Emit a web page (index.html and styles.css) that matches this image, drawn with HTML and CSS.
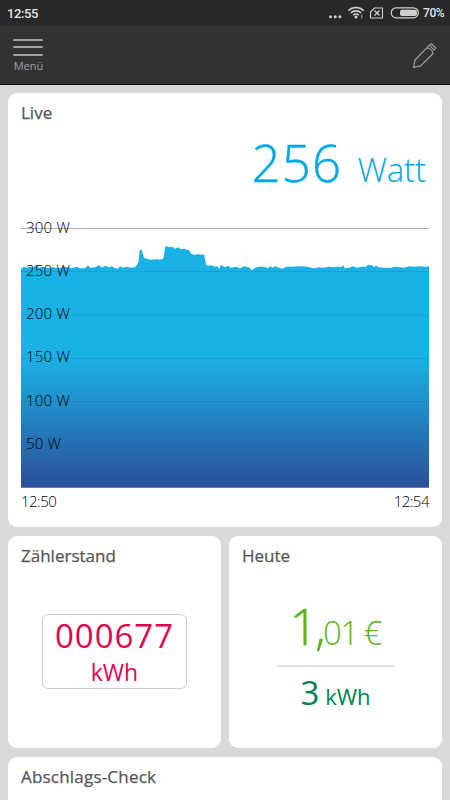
FILE: index.html
```html
<!DOCTYPE html>
<html lang="de">
<head>
	<meta charset="utf-8">
	<meta name="viewport" content="width=device-width,initial-scale=1">
	<title>Live</title>
	<link rel="stylesheet" href="styles.css">
</head>
<body>
	<div class="statusbar">
		<span class="clock">12:55</span>
		<svg class="status-icons" width="96" height="26" viewBox="0 0 96 26">
			<g fill="#d0d0d0">
				<circle cx="2.5" cy="16.7" r="1.5"/><circle cx="7.2" cy="16.7" r="1.5"/><circle cx="11.9" cy="16.7" r="1.5"/>
				<circle cx="28" cy="17" r="1.6"/>
				<path d="M33 14.5h1.4v4H33z" opacity=".5"/>
				<rect x="72" y="9.7" width="17" height="6.3" rx="2"/>
			</g>
			<g fill="none" stroke="#d0d0d0" stroke-width="1.6">
				<path d="M20.3 10.7a11 11 0 0 1 15.4 0M22.8 13a7.5 7.5 0 0 1 10.4 0M25.2 15.3a4 4 0 0 1 5.6 0"/>
				<path d="M46.5 8h8v10h-12v-6z" stroke-width="1.1"/>
				<path d="M46.500 10.500l5 5M51.500 10.500l-5 5" stroke-width="1.3"/>
				<rect x="63.2" y="7.8" width="27.2" height="10" rx="5" stroke-width="1.2"/>
			</g>
		</svg>
		<span class="percent">70%</span>
	</div>
	<div class="navbar">
		<a class="menu">
			<i></i><i></i><i></i>
			<span>Menü</span>
		</a>
		<svg class="edit" width="26" height="28" viewBox="0 0 26 28" fill="none" stroke="#a0a0a0" stroke-width="1.2" stroke-linejoin="round" stroke-linecap="round">
			<path d="M1.500 25.500l1.500-7.500L17.500 3.200l2-1.500 4.200 4.300-1.600 2.200M1.500 25.500l7.200-1.600L21 11.500M14.800 6c3 .2 5.800 2.500 6.200 5.500M17.500 3.200l4.600 5"/>
		</svg>
	</div>
	<div class="cards">
		<div class="card live">
			<h2>Live</h2>
			<div class="now"><span class="num">256</span><span class="unit">Watt</span></div>
			<svg class="chart" width="408" height="264" viewBox="0 0 408 264">
				<defs>
					<linearGradient id="fill" x1="0" y1="20" x2="0" y2="264" gradientUnits="userSpaceOnUse">
						<stop offset="0" stop-color="#1ab2e5"/>
						<stop offset=".46" stop-color="#1ab2e5"/>
						<stop offset="1" stop-color="#2b4e99"/>
					</linearGradient>
				</defs>
				<path transform="translate(0 .8)" fill="url(#fill)" d="M0 263V44L3 42 6 43 9 42 12 43 15 40 18 43 22 42 27 43.500 32 42.500 38 43.500 44 42 50 43.500 56 42 59 43.500 64 43.500 67 40.500 69 43 74 42.500 78 40.500 81 43 84 41 88 42.500 91 41.500 94 43.500 97 44 99 41.500 102 43 106 42 110 43 114 42.500 116 40 117.500 37 118.500 27 119.500 24 121 26 123 33 126 34 129 35 132 34.500 134 35 136 34 138 35 142 34 143 31 144 22 146 21.500 148 22.500 151 22 154 24 157 22.500 160 24.500 163 24 166 25 168 25 170 29 173 30 178 29.500 182 30 183 29 185 40 187 41 190 40.500 194 42 197 41.500 198 44.500 200 40 204 42.500 207 41 210 43 215 42 219 43.500 223 41.500 228 42.500 231 45.500 234 43 238 42 243 42 247 43.500 249 41.500 252 43 254 41.500 258 43 261 44 266 42 272 42 277 41.500 283 41.500 288 42.500 293 43.500 298 42.500 303 43 307 42 312 42.500 316 42 320 42.500 322 40.500 324 43.500 328 43 332 41.500 336 43 340 42 345 42 347 40 351 40.500 353 42.500 355 41 358 42.500 364 43 370 43 374 42 379 42.500 383 43 388 41.500 394 42 399 41.500 404 42 408 41.500V263z"/>
				<path d="M0 4.500H408" stroke="#b0b0b0"/>
				<path d="M0 47.500H408M0 91H408M0 134.500H408M0 177.500H408M0 220.500H408" stroke="#125f91" stroke-opacity=".22"/>
				<g class="labels">
					<text x="5" y="9">300 W</text>
					<text x="5" y="52">250 W</text>
					<text x="5" y="95">200 W</text>
					<text x="5" y="138">150 W</text>
					<text x="5" y="181.500">100 W</text>
					<text x="5" y="225">50 W</text>
				</g>
			</svg>
			<div class="times"><span>12:50</span><span>12:54</span></div>
		</div>
		<div class="card meter">
			<h2>Zählerstand</h2>
			<div class="counter">
				<span class="digits">000677</span>
				<span class="kwh">kWh</span>
			</div>
		</div>
		<div class="card today">
			<h2>Heute</h2>
			<div class="cost"><span class="euro">1,</span><span class="cent">01</span><span class="sign">€</span></div>
			<div class="usage"><span class="amount">3</span><span class="kwh">kWh</span></div>
		</div>
		<div class="card check">
			<h2>Abschlags-Check</h2>
		</div>
	</div>
</body>
</html>
```

FILE: styles.css
```css
* { box-sizing: border-box; }
body { margin: 0; height: 800px; overflow: hidden; background: #d9d9d9; font-family: "Open Sans", sans-serif; color: #555; }

.statusbar { display: flex; align-items: center; height: 26px; padding: 0 6px 0 7px; background: #282828; color: #e4e4e4; font-family: Roboto, sans-serif; font-weight: 500; }
.clock { font-size: 13px; letter-spacing: -.4px; flex: 1; }
.status-icons { margin-right: -1px; }
.percent { font-size: 12px; width: 21px; letter-spacing: -.4px; white-space: nowrap; }

.navbar { display: flex; justify-content: space-between; height: 59px; padding: 13px 12px 0 13px; background: #323232; border-bottom: 1px solid #000; }
.menu { width: 31px; color: #a0a09c; font-size: 11px; text-align: center; }
.menu i { display: block; width: 30px; height: 2px; margin-bottom: 5px; background: #a0a09c; border-radius: 1px; }
.menu i + i + i { margin-top: 6px; }
.menu span { display: block; margin-top: -2px; line-height: 14px; }
.edit { margin-top: 3px; }

.cards { display: grid; grid-template-columns: 1fr 1fr; grid-template-rows: 434px 212px 43px; gap: 9px 8px; padding: 8px 8px 0; }
.card { background: #fff; border-radius: 9px; padding: 9px 13px; }
.card h2 { margin: 0; font-size: 17px; line-height: 22px; font-weight: 500; -webkit-text-stroke: .25px #555; }
.live, .check { grid-column: 1 / 3; }
.check { border-radius: 9px 9px 0 0; }
.check h2 { letter-spacing: .2px; }

.now { height: 64px; margin-top: 6px; padding-right: 3px; color: #00a8e1; font-weight: 300; line-height: 64px; text-align: right; }
.now .num { font-size: 51px; letter-spacing: 1.2px; -webkit-text-stroke: .4px #00a8e1; }
.now .unit { margin-left: 15px; font-size: 33px; letter-spacing: -.1px; }
.chart { display: block; margin-top: 30px; overflow: visible; }
.labels { font-size: 15px; font-weight: 300; letter-spacing: .2px; fill: #000; }
.times { display: flex; justify-content: space-between; color: #000; font-size: 15px; font-weight: 300; line-height: 22px; letter-spacing: -.5px; margin-top: 2px; }

.counter { width: 145px; height: 75px; margin: 47px auto 0; border: 1px solid #ccc; border-radius: 6px; color: #e5004f; text-align: center; }
.counter span { display: block; }
.digits { font-size: 33px; line-height: 42px; letter-spacing: 1px; }
.counter .kwh { font-size: 23px; line-height: 30px; }

.today { text-align: center; }
.today h2 { text-align: left; }
.cost { width: 117px; height: 63px; margin: 37px auto 0; border-bottom: 2px solid #e1e1e1; color: #5ab31c; font-weight: 300; line-height: 45px; white-space: nowrap; }
.euro { font-size: 50px; letter-spacing: -3px; -webkit-text-stroke: .4px #5ab31c; }
.cent { font-size: 33px; letter-spacing: -1.5px; }
.sign { margin-left: 6px; font-size: 33px; letter-spacing: -1px; }
.usage { color: #008350; line-height: 52px; }
.amount { font-size: 33px; margin-right: 6px; }
.usage .kwh { font-size: 22px; }
```
